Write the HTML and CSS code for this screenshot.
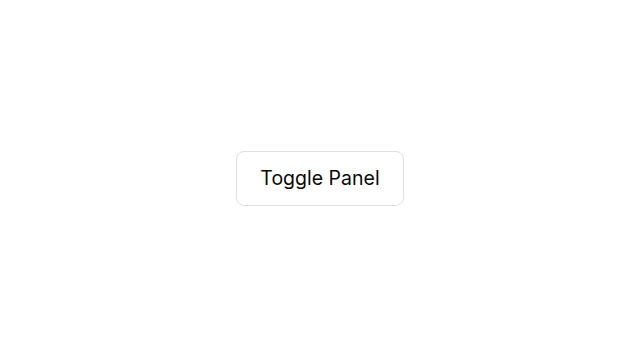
FILE: index.html
```html
<!DOCTYPE html>
<html lang="en">
<head>
<meta charset="utf-8">
<title>Toggle Panel</title>
<link rel="stylesheet" href="styles.css">
</head>
<body>
<main class="page">
  <button class="toggle-btn" type="button">Toggle Panel</button>
</main>
</body>
</html>
```

FILE: styles.css
```css
html, body {
  margin: 0;
  padding: 0;
  height: 100%;
  background: #ffffff;
}
.page {
  height: 100%;
  display: flex;
  align-items: center;
  justify-content: center;
}
.toggle-btn {
  font-family: Inter, "Noto Sans", sans-serif;
  font-size: 19.5px;
  line-height: 23px;
  font-weight: 400;
  color: #0a0a0a;
  background: #ffffff;
  border: 1px solid #e0e0e0;
  border-radius: 8px;
  padding: 15px 23px;
  cursor: pointer;
}
```
